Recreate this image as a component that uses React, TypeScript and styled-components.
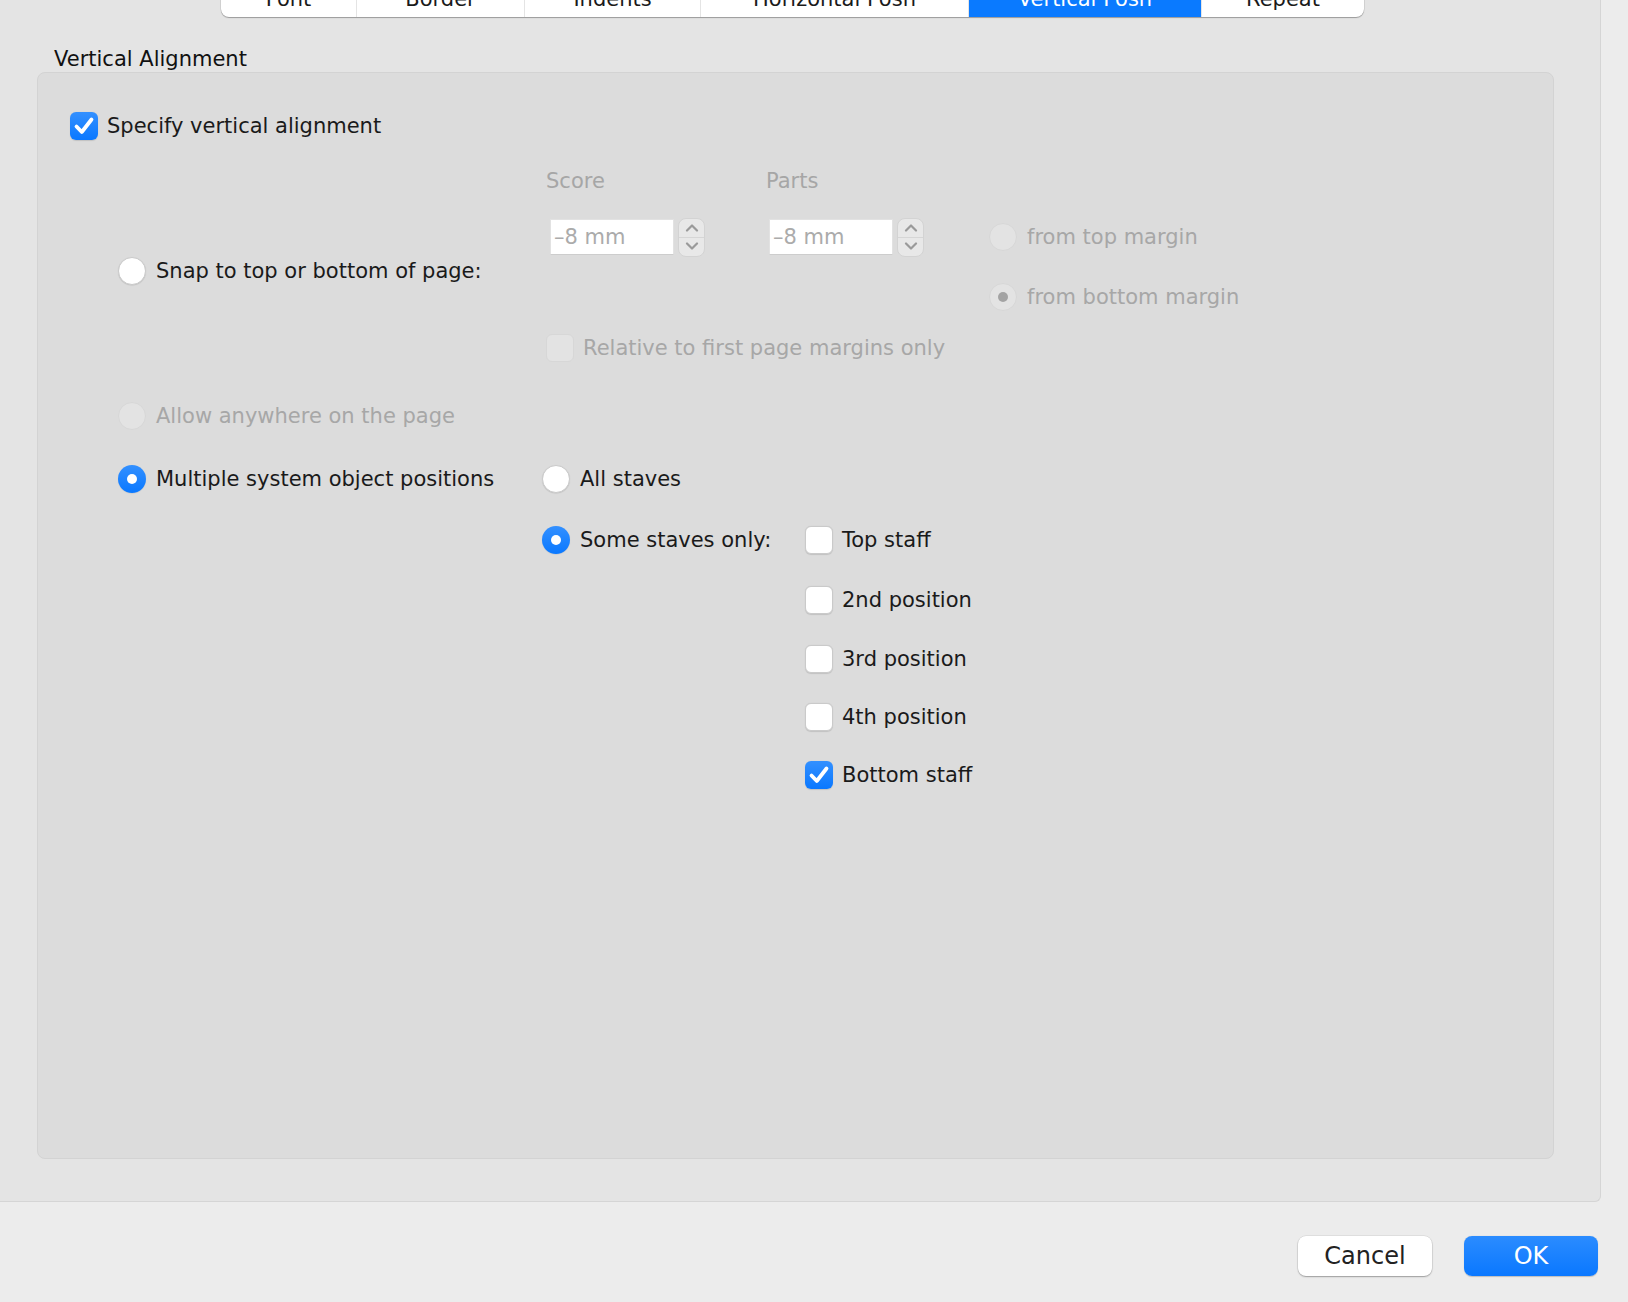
import styled, { createGlobalStyle } from "styled-components";

const GlobalStyle = createGlobalStyle`
  html, body {
    margin: 0;
    padding: 0;
    background: #ececec;
  }
`;

const Window = styled.div`
  display: flex;
  flex-direction: column;
  width: 1628px;
  height: 1302px;
  overflow: hidden;
  background: #ececec;
  font-family: "DejaVu Sans", "Liberation Sans", sans-serif;
  font-size: 21px;
  color: #1a1a1a;
`;

const Panel = styled.div`
  display: flex;
  flex-direction: column;
  box-sizing: border-box;
  width: 1616px;
  height: 1202px;
  margin-left: -15px;
  background: #e4e4e4;
  border-right: 1px solid #d5d5d5;
  border-bottom: 1px solid #d5d5d5;
  border-bottom-right-radius: 6px;
`;

// tabs poke above the window edge, as in the dialog where only their lower half shows
const TabBar = styled.div`
  display: flex;
  align-self: center;
  height: 36px;
  margin-top: -19px;
  background: #fff;
  border-radius: 8px;
  overflow: hidden;
  box-shadow: 0 1px 1px rgba(0, 0, 0, 0.28), 0 0 0 0.5px rgba(0, 0, 0, 0.12);
`;

const Tab = styled.div<{ $w: number; $active?: boolean }>`
  box-sizing: border-box;
  width: ${(p) => p.$w}px;
  display: flex;
  align-items: center;
  justify-content: center;
  color: ${(p) => (p.$active ? "#fff" : "#1a1a1a")};
  background: ${(p) => (p.$active ? "#0a7aff" : "transparent")};

  & + & {
    border-left: 1px solid #e4e4e4;
  }
`;

const SectionTitle = styled.div`
  margin: 30px 0 1px 69px;
  line-height: 24px;
  color: #111;
`;

const GroupBox = styled.div`
  box-sizing: border-box;
  width: 1517px;
  height: 1087px;
  margin-left: 52px;
  padding: 39px 0 0 32px;
  background: #dcdcdc;
  border: 1px solid #d3d3d3;
  border-radius: 8px;
`;

const Options = styled.div`
  margin-left: 48px;
`;

const SnapGrid = styled.div`
  display: grid;
  grid-template-columns: 428px 220px 223px auto;
  grid-template-rows: 38px 74px 46px 56px;
  margin-top: 22px;
`;

const MultiGrid = styled.div`
  display: grid;
  grid-template-columns: 424px 263px auto;
  grid-template-rows: 62px 60px 60px 58px 58px 58px;
  margin-top: 12px;
`;

const Cell = styled.div<{ $col: string; $row: string; $shift?: number }>`
  grid-column: ${(p) => p.$col};
  grid-row: ${(p) => p.$row};
  align-self: center;
  display: flex;
  margin-top: ${(p) => p.$shift ?? 0}px;
`;

const AllowRow = styled.div`
  display: flex;
  align-items: center;
  height: 40px;
  margin-top: 20px;
`;

const Option = styled.label<{ $disabled?: boolean }>`
  display: flex;
  align-items: center;
  gap: 10px;
  white-space: nowrap;
  color: ${(p) => (p.$disabled ? "#a7a7a7" : "#1a1a1a")};
`;

const CheckOption = styled(Option)`
  gap: 9px;
`;

const FieldLabel = styled.span`
  color: #a6a6a6;
`;

const Box = styled.span<{ $checked?: boolean; $disabled?: boolean }>`
  flex: none;
  box-sizing: border-box;
  width: 28px;
  height: 28px;
  border-radius: 6px;
  display: flex;
  align-items: center;
  justify-content: center;
  background: ${(p) =>
    p.$checked
      ? "linear-gradient(#3390ff, #0a78ff)"
      : p.$disabled
      ? "#e3e3e3"
      : "#fff"};
  border: ${(p) =>
    p.$checked ? "none" : `1px solid ${p.$disabled ? "#d7d7d7" : "#cacaca"}`};
  box-shadow: ${(p) =>
    p.$disabled ? "none" : "0 0.5px 1px rgba(0, 0, 0, 0.12)"};
`;

const Round = styled(Box)`
  border-radius: 50%;
`;

const Dot = styled.span<{ $grey?: boolean }>`
  width: 10px;
  height: 10px;
  border-radius: 50%;
  background: ${(p) => (p.$grey ? "#a3a3a3" : "#fff")};
`;

const Spinner = styled.div<{ $indent: number }>`
  display: flex;
  align-items: center;
  gap: 4px;
  margin-left: ${(p) => p.$indent}px;
`;

const Field = styled.div`
  box-sizing: border-box;
  width: 124px;
  height: 36px;
  padding-left: 3px;
  display: flex;
  align-items: center;
  background: #fff;
  border: 1px solid #e2e2e2;
  border-bottom-color: #cdcdcd;
  color: #ababab;
`;

const Stepper = styled.div`
  box-sizing: border-box;
  width: 27px;
  height: 39px;
  display: flex;
  flex-direction: column;
  border-radius: 8px;
  background: #e8e8e8;
  border: 1px solid #d3d3d3;
  overflow: hidden;
`;

const StepHalf = styled.div`
  flex: 1;
  display: flex;
  align-items: center;
  justify-content: center;

  & + & {
    border-top: 1px solid #d6d6d6;
  }
`;

const Footer = styled.div`
  display: flex;
  justify-content: flex-end;
  gap: 32px;
  padding: 34px 30px 0 0;
`;

const Button = styled.div<{ $primary?: boolean }>`
  box-sizing: border-box;
  width: 134px;
  height: 40px;
  display: flex;
  align-items: center;
  justify-content: center;
  border-radius: 8px;
  font-size: 24px;
  color: ${(p) => (p.$primary ? "#fff" : "#222")};
  background: ${(p) =>
    p.$primary ? "linear-gradient(#2b8cff, #0a78ff)" : "#fff"};
  box-shadow: ${(p) =>
    p.$primary
      ? "0 0.5px 1px rgba(0, 0, 0, 0.2)"
      : "0 1px 1.5px rgba(0, 0, 0, 0.3), 0 0 0 0.5px rgba(0, 0, 0, 0.1)"};
`;

const Tick = () => (
  <svg width="22" height="20" viewBox="0 0 22 20">
    <path
      d="M3.5 10.5 L8.8 16 L18.5 3.5"
      fill="none"
      stroke="#fff"
      strokeWidth="3.8"
      strokeLinecap="round"
      strokeLinejoin="round"
    />
  </svg>
);

const Chevron = ({ up }: { up?: boolean }) => (
  <svg width="14" height="9" viewBox="0 0 14 9">
    <path
      d={up ? "M2 7.5 L7 2.5 L12 7.5" : "M2 1.5 L7 6.5 L12 1.5"}
      fill="none"
      stroke="#9a9a9a"
      strokeWidth="2.2"
      strokeLinecap="round"
      strokeLinejoin="round"
    />
  </svg>
);

type ControlProps = {
  label: string;
  checked?: boolean;
  disabled?: boolean;
};

const CheckBox = ({ label, checked, disabled }: ControlProps) => (
  <CheckOption $disabled={disabled}>
    <Box $checked={checked} $disabled={disabled}>
      {checked && <Tick />}
    </Box>
    {label}
  </CheckOption>
);

const Radio = ({ label, checked, disabled }: ControlProps) => (
  <Option $disabled={disabled}>
    <Round $checked={checked && !disabled} $disabled={disabled}>
      {checked && <Dot $grey={disabled} />}
    </Round>
    {label}
  </Option>
);

const SpinField = ({ value, indent }: { value: string; indent: number }) => (
  <Spinner $indent={indent}>
    <Field>{value}</Field>
    <Stepper>
      <StepHalf>
        <Chevron up />
      </StepHalf>
      <StepHalf>
        <Chevron />
      </StepHalf>
    </Stepper>
  </Spinner>
);

const tabs = [
  { label: "Font", w: 135 },
  { label: "Border", w: 168 },
  { label: "Indents", w: 176 },
  { label: "Horizontal Posn", w: 268 },
  { label: "Vertical Posn", w: 233, active: true },
  { label: "Repeat", w: 163 },
];

const staves = [
  { label: "Top staff" },
  { label: "2nd position" },
  { label: "3rd position" },
  { label: "4th position" },
  { label: "Bottom staff", checked: true },
];

export default function App() {
  return (
    <Window>
      <GlobalStyle />
      <Panel>
        <TabBar>
          {tabs.map((t) => (
            <Tab key={t.label} $w={t.w} $active={t.active}>
              {t.label}
            </Tab>
          ))}
        </TabBar>
        <SectionTitle>Vertical Alignment</SectionTitle>
        <GroupBox>
          <CheckBox label="Specify vertical alignment" checked />
          <Options>
            <SnapGrid>
              <Cell $col="1" $row="2 / 4" $shift={22}>
                <Radio label="Snap to top or bottom of page:" />
              </Cell>
              <Cell $col="2" $row="1">
                <FieldLabel>Score</FieldLabel>
              </Cell>
              <Cell $col="3" $row="1">
                <FieldLabel>Parts</FieldLabel>
              </Cell>
              <Cell $col="2" $row="2">
                <SpinField value="–8 mm" indent={4} />
              </Cell>
              <Cell $col="3" $row="2">
                <SpinField value="–8 mm" indent={3} />
              </Cell>
              <Cell $col="4" $row="2">
                <Radio label="from top margin" disabled />
              </Cell>
              <Cell $col="4" $row="3">
                <Radio label="from bottom margin" checked disabled />
              </Cell>
              <Cell $col="2 / 4" $row="4">
                <CheckBox label="Relative to first page margins only" disabled />
              </Cell>
            </SnapGrid>
            <AllowRow>
              <Radio label="Allow anywhere on the page" disabled />
            </AllowRow>
            <MultiGrid>
              <Cell $col="1" $row="1">
                <Radio label="Multiple system object positions" checked />
              </Cell>
              <Cell $col="2" $row="1">
                <Radio label="All staves" />
              </Cell>
              <Cell $col="2" $row="2">
                <Radio label="Some staves only:" checked />
              </Cell>
              {staves.map((s, i) => (
                <Cell key={s.label} $col="3" $row={String(i + 2)}>
                  <CheckBox label={s.label} checked={s.checked} />
                </Cell>
              ))}
            </MultiGrid>
          </Options>
        </GroupBox>
      </Panel>
      <Footer>
        <Button>Cancel</Button>
        <Button $primary>OK</Button>
      </Footer>
    </Window>
  );
}
